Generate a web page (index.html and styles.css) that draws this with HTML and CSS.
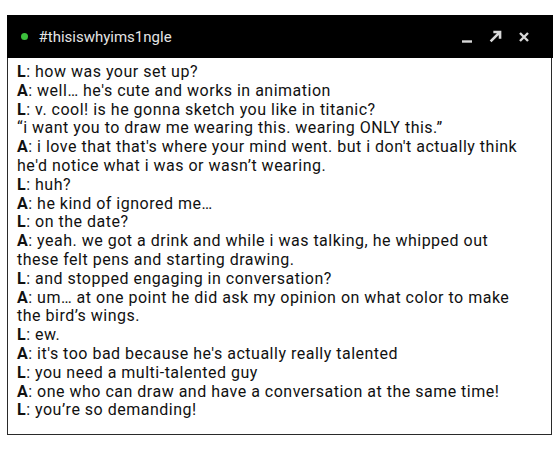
FILE: index.html
```html
<!DOCTYPE html>
<html>
<head>
<meta charset="utf-8">
<link rel="stylesheet" href="styles.css">
</head>
<body>
<div class="window">
  <div class="titlebar">
    <span class="dot"></span>
    <span class="title">#thisiswhyims1ngle</span>
    <span class="controls">
      <svg class="ctl" width="12" height="12" viewBox="0 0 12 12"><path d="M1 10.5H11" stroke="#d8d8d8" stroke-width="2.4"/></svg>
      <svg class="ctl" width="13" height="13" viewBox="0 0 12 12"><path d="M1.5 10.5L10 2M4 1.8H10.2V8" stroke="#d8d8d8" stroke-width="2.4" fill="none"/></svg>
      <svg class="ctl" width="12" height="12" viewBox="0 0 12 12"><path d="M2 2L10 10M10 2L2 10" stroke="#d8d8d8" stroke-width="2.4"/></svg>
    </span>
  </div>
  <div class="body">
    <p><b>L</b>: how was your set up?</p>
    <p><b>A</b>: well… he's cute and works in animation</p>
    <p><b>L</b>: v. cool! is he gonna sketch you like in titanic?</p>
    <p>“i want you to draw me wearing this. wearing ONLY this.”</p>
    <p><b>A</b>: i love that that's where your mind went. but i don't actually think he'd notice what i was or wasn’t wearing.</p>
    <p><b>L</b>: huh?</p>
    <p><b>A</b>: he kind of ignored me…</p>
    <p><b>L</b>: on the date?</p>
    <p><b>A</b>: yeah. we got a drink and while i was talking, he whipped out these felt pens and starting drawing.</p>
    <p><b>L</b>: and stopped engaging in conversation?</p>
    <p><b>A</b>: um… at one point he did ask my opinion on what color to make the bird’s wings.</p>
    <p><b>L</b>: ew.</p>
    <p><b>A</b>: it's too bad because he's actually really talented</p>
    <p><b>L</b>: you need a multi-talented guy</p>
    <p><b>A</b>: one who can draw and have a conversation at the same time!</p>
    <p><b>L</b>: you’re so demanding!</p>
  </div>
</div>
</body>
</html>
```
FILE: styles.css
```css
html, body {
  margin: 0;
  padding: 0;
  background: #fff;
}
body {
  padding: 15px 8px 0 7px;
  font-family: Roboto, "Liberation Sans", sans-serif;
}
.window {
  width: 545px;
  height: 420px;
  box-sizing: border-box;
  border: 1.5px solid #2a2a2a;
  border-top: none;
  display: flex;
  flex-direction: column;
}
.titlebar {
  height: 43px;
  margin: 0 -1.5px;
  background: #000;
  display: flex;
  align-items: center;
  padding: 0 0 0 12px;
  flex-shrink: 0;
}
.dot {
  width: 7px;
  height: 7px;
  border-radius: 50%;
  background: #3cc03c;
  margin-right: 11px;
  margin-left: 2px;
}
.title {
  color: #e4e4e4;
  font-size: 15px;
  letter-spacing: 0;
}
.controls {
  margin-left: auto;
  display: flex;
  gap: 16px;
  margin-right: 23px;
  align-items: center;
}
.ctl {
  display: block;
}
.body {
  padding: 5px 25px 0 9px;
  font-size: 16px;
  line-height: 18.8px;
  letter-spacing: 0.5px;
  color: #111;
}
.body p {
  margin: 0;
}
.body b {
  font-weight: 700;
}
```
